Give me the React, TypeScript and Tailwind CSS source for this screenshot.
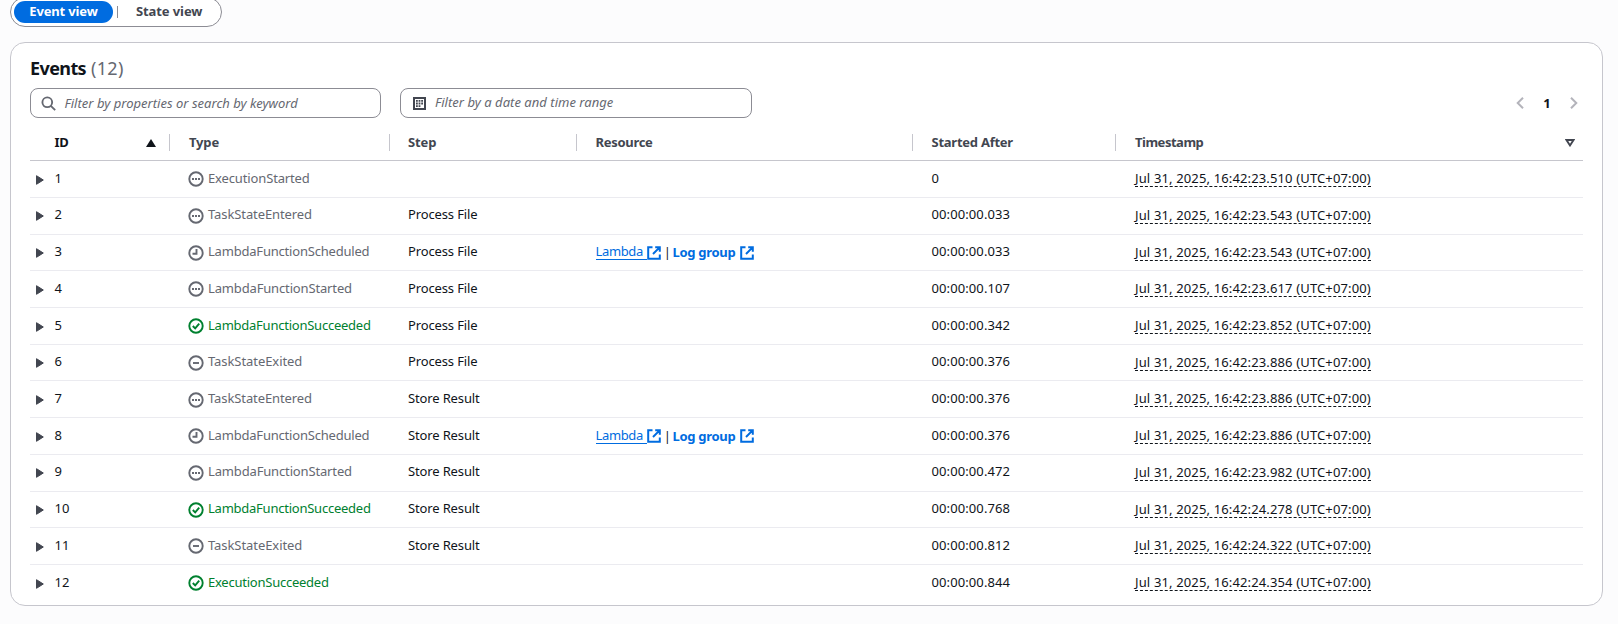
import { ReactNode } from "react";

type Kind = "pending" | "scheduled" | "success" | "stopped";

interface EventRow {
  id: number;
  type: string;
  kind: Kind;
  step?: string;
  links?: boolean;
  after: string;
  time: string;
}

const events: EventRow[] = [
  { id: 1, type: "ExecutionStarted", kind: "pending", after: "0", time: "16:42:23.510" },
  { id: 2, type: "TaskStateEntered", kind: "pending", step: "Process File", after: "00:00:00.033", time: "16:42:23.543" },
  { id: 3, type: "LambdaFunctionScheduled", kind: "scheduled", step: "Process File", links: true, after: "00:00:00.033", time: "16:42:23.543" },
  { id: 4, type: "LambdaFunctionStarted", kind: "pending", step: "Process File", after: "00:00:00.107", time: "16:42:23.617" },
  { id: 5, type: "LambdaFunctionSucceeded", kind: "success", step: "Process File", after: "00:00:00.342", time: "16:42:23.852" },
  { id: 6, type: "TaskStateExited", kind: "stopped", step: "Process File", after: "00:00:00.376", time: "16:42:23.886" },
  { id: 7, type: "TaskStateEntered", kind: "pending", step: "Store Result", after: "00:00:00.376", time: "16:42:23.886" },
  { id: 8, type: "LambdaFunctionScheduled", kind: "scheduled", step: "Store Result", links: true, after: "00:00:00.376", time: "16:42:23.886" },
  { id: 9, type: "LambdaFunctionStarted", kind: "pending", step: "Store Result", after: "00:00:00.472", time: "16:42:23.982" },
  { id: 10, type: "LambdaFunctionSucceeded", kind: "success", step: "Store Result", after: "00:00:00.768", time: "16:42:24.278" },
  { id: 11, type: "TaskStateExited", kind: "stopped", step: "Store Result", after: "00:00:00.812", time: "16:42:24.322" },
  { id: 12, type: "ExecutionSucceeded", kind: "success", after: "00:00:00.844", time: "16:42:24.354" },
];

const typeTracking: Record<string, string> = {
  ExecutionStarted: "tracking-[-0.14px]",
  TaskStateEntered: "tracking-[-0.1px]",
  TaskStateExited: "tracking-[-0.07px]",
  LambdaFunctionScheduled: "tracking-[-0.2px]",
  LambdaFunctionStarted: "tracking-[-0.15px]",
  LambdaFunctionSucceeded: "tracking-[-0.24px]",
  ExecutionSucceeded: "tracking-[-0.24px]",
};

const columns = "grid grid-cols-[140px_220px_187px_336px_203px_467px]";

function StatusIcon({ kind }: { kind: Kind }) {
  return (
    <svg viewBox="0 0 16 16" className="mt-[3px] size-[16px] shrink-0" fill="none" stroke="currentColor" strokeWidth="1.9">
      <circle cx="8" cy="8" r="6.7" />
      {kind === "pending" && (
        <g fill="currentColor" stroke="none">
          <rect x="4" y="7" width="2" height="2" />
          <rect x="7" y="7" width="2" height="2" />
          <rect x="10" y="7" width="2" height="2" />
        </g>
      )}
      {kind === "scheduled" && <path d="M8.500 4v4.800H4.500" />}
      {kind === "success" && <path d="m4.800 8 2.400 2.400 4-4.800" />}
      {kind === "stopped" && <path d="M5 8h6" />}
    </svg>
  );
}

function ExternalIcon() {
  return (
    <svg viewBox="0 0 14 14" className="mt-px size-[14px] shrink-0" fill="none" stroke="currentColor" strokeWidth="2">
      <path d="M5.500 1.200H1.200v11.600h11.600V8.600M8.200 1.200h4.600v4.600M12.600 1.400 6 8" />
    </svg>
  );
}

function HeaderCell({ children, last, className }: { children: ReactNode; last?: boolean; className: string }) {
  return (
    <div className={`flex items-center ${className}`}>
      <div className="flex flex-1 items-center justify-between pb-[2px]">{children}</div>
      {!last && <div className="h-[17px] w-px bg-[#c6c6cd]" />}
    </div>
  );
}

export default function App() {
  return (
    <div className="h-[624px] overflow-hidden bg-[#fcfcfd] pl-[10px] font-['Noto_Sans','Open_Sans',sans-serif] text-[13px] leading-[18px] text-[#0f141a]">
      <div className="-mt-[3px] flex h-[30px] w-[212px] items-center rounded-full border border-[#8c8c94] bg-white pl-[3px] font-bold">
        <div className="flex h-[22px] w-[99px] items-center justify-center rounded-full bg-[#006ce0] pb-[2px] tracking-[-0.15px] text-white">
          Event view
        </div>
        <div className="ml-[4px] h-[12px] w-px bg-[#8c8c94]" />
        <div className="ml-[18px] pb-[2px] tracking-[-0.1px] text-[#424650]">State view</div>
      </div>

      <div className="mt-[15px] h-[564px] w-[1593px] rounded-[15px] border border-[#c6c6cd] bg-white pl-[19px]">
        <h2 className="mt-[13px] flex h-[24px] items-center gap-[5px] text-[18px] leading-[24px]">
          <span className="font-bold tracking-[-0.6px]">Events</span>
          <span className="tracking-[0.3px] text-[#656871]">(12)</span>
        </h2>

        <div className="mt-[8px] flex h-[30px] items-center">
          <div className="flex h-[30px] w-[351px] items-center rounded-[8px] border border-[#8c8c94] pl-[10px] text-[#656871]">
            <svg viewBox="0 0 16 16" className="mt-px size-[15px]" fill="none" stroke="currentColor" strokeWidth="2">
              <circle cx="6.700" cy="6.700" r="5.200" />
              <path d="m10.500 10.500 4.600 4.600" />
            </svg>
            <span className="ml-[8.500px] italic tracking-[0.02px]">Filter by properties or search by keyword</span>
          </div>
          <div className="ml-[19px] flex h-[30px] w-[352px] items-center rounded-[8px] border border-[#8c8c94] pl-[12px] text-[#656871]">
            <svg viewBox="0 0 13 13" className="mt-px size-[13px] text-[#424650]" fill="currentColor">
              <path fillRule="evenodd" d="M0 0h13v13H0ZM2 2v9h9V2Z" />
              <path d="M3 3h1.800v1.800H3ZM5.600 3h1.800v1.800H5.600ZM8.200 3h1.800v1.800H8.200ZM3 5.600h1.800v1.800H3ZM5.600 5.600h1.800v1.800H5.600ZM8.200 5.600h1.800v1.800H8.200ZM3 8.200h1.800v1.800H3ZM5.600 8.200h1.800v1.800H5.600Z" />
            </svg>
            <span className="ml-[9px] pb-[2px] italic tracking-[0.03px]">Filter by a date and time range</span>
          </div>
          <div className="ml-[764px] flex items-center text-[#b4b4bb]">
            <svg viewBox="0 0 8 12" className="h-[12px] w-[8px]" fill="none" stroke="currentColor" strokeWidth="2">
              <path d="M7 .7 1.700 6 7 11.300" />
            </svg>
            <span className="ml-[19px] w-[8px] text-center font-bold text-[#0f141a]">1</span>
            <svg viewBox="0 0 8 12" className="ml-[19px] h-[12px] w-[8px]" fill="none" stroke="currentColor" strokeWidth="2">
              <path d="M1 .7 6.300 6 1 11.300" />
            </svg>
          </div>
        </div>

        <div className={`${columns} mt-[7px] h-[36.1px] w-[1553px] border-b border-[#c6c6cd] font-bold`}>
          <HeaderCell className="pl-[24.500px] text-[#0f141a]">
            <span className="tracking-[-0.4px]">ID</span>
            <svg viewBox="0 0 10 8" className="mt-[2px] mr-[13px] h-[8px] w-[10px]" fill="currentColor">
              <path d="M5 0 10 8H0Z" />
            </svg>
          </HeaderCell>
          <HeaderCell className="pl-[19px] tracking-[-0.15px] text-[#424650]">Type</HeaderCell>
          <HeaderCell className="pl-[18px] tracking-[-0.1px] text-[#424650]">Step</HeaderCell>
          <HeaderCell className="pl-[18.500px] tracking-[-0.3px] text-[#424650]">Resource</HeaderCell>
          <HeaderCell className="pl-[18.500px] tracking-[-0.25px] text-[#424650]">Started After</HeaderCell>
          <HeaderCell last className="pl-[19px] tracking-[-0.48px] text-[#424650]">
            <span>Timestamp</span>
            <svg viewBox="0 0 10 8" className="mt-[3px] mr-[8.500px] h-[8px] w-[10px]" fill="none" stroke="currentColor" strokeWidth="1.900">
              <path d="M1.500 1h7L5 6.400Z" />
            </svg>
          </HeaderCell>
        </div>

        {events.map((e) => (
          <div key={e.id} className={`${columns} h-[36.72px] w-[1553px] border-b border-[#ebebf0] last:border-transparent`}>
            <div className="flex items-center pb-[2.500px] pl-[6px]">
              <svg viewBox="0 0 8 10" className="mt-[4px] h-[10px] w-[8px] text-[#424650]" fill="currentColor" stroke="currentColor" strokeWidth="1" strokeLinejoin="round">
                <path d="M.5 .7 7.300 5 .5 9.300Z" />
              </svg>
              <span className="ml-[10.500px]">{e.id}</span>
            </div>
            <div className={`flex items-center gap-[4px] pb-[2.500px] pl-[18px] ${e.kind === "success" ? "text-[#00802f]" : "text-[#656871]"}`}>
              <StatusIcon kind={e.kind} />
              <span className={typeTracking[e.type]}>{e.type}</span>
            </div>
            <div className="flex items-center pb-[2.500px] pl-[18px] tracking-[-0.14px]">{e.step}</div>
            <div className="flex items-center pb-[0.500px] pl-[18.500px]">
              {e.links && (
                <>
                  <a className="flex items-center text-[#006ce0]">
                    <span className="border-b border-[#006ce0] pr-[4.500px] leading-[15px] tracking-[-0.35px]">Lambda</span>
                    <ExternalIcon />
                  </a>
                  <span className="ml-[2px] w-[8px] text-center">|</span>
                  <a className="ml-px flex items-center gap-[5px] font-bold tracking-[-0.28px] text-[#006ce0]">
                    Log group
                    <ExternalIcon />
                  </a>
                </>
              )}
            </div>
            <div className="flex items-center pb-[2.500px] pl-[18.500px] tracking-[0.1px]">{e.after}</div>
            <div className="flex items-center pb-[0.700px] pl-[19px] tracking-[0.14px]">
              <span className="border-b border-dashed border-[#0f141a] leading-[16px]">Jul 31, 2025, {e.time} (UTC+07:00)</span>
            </div>
          </div>
        ))}
      </div>
    </div>
  );
}
